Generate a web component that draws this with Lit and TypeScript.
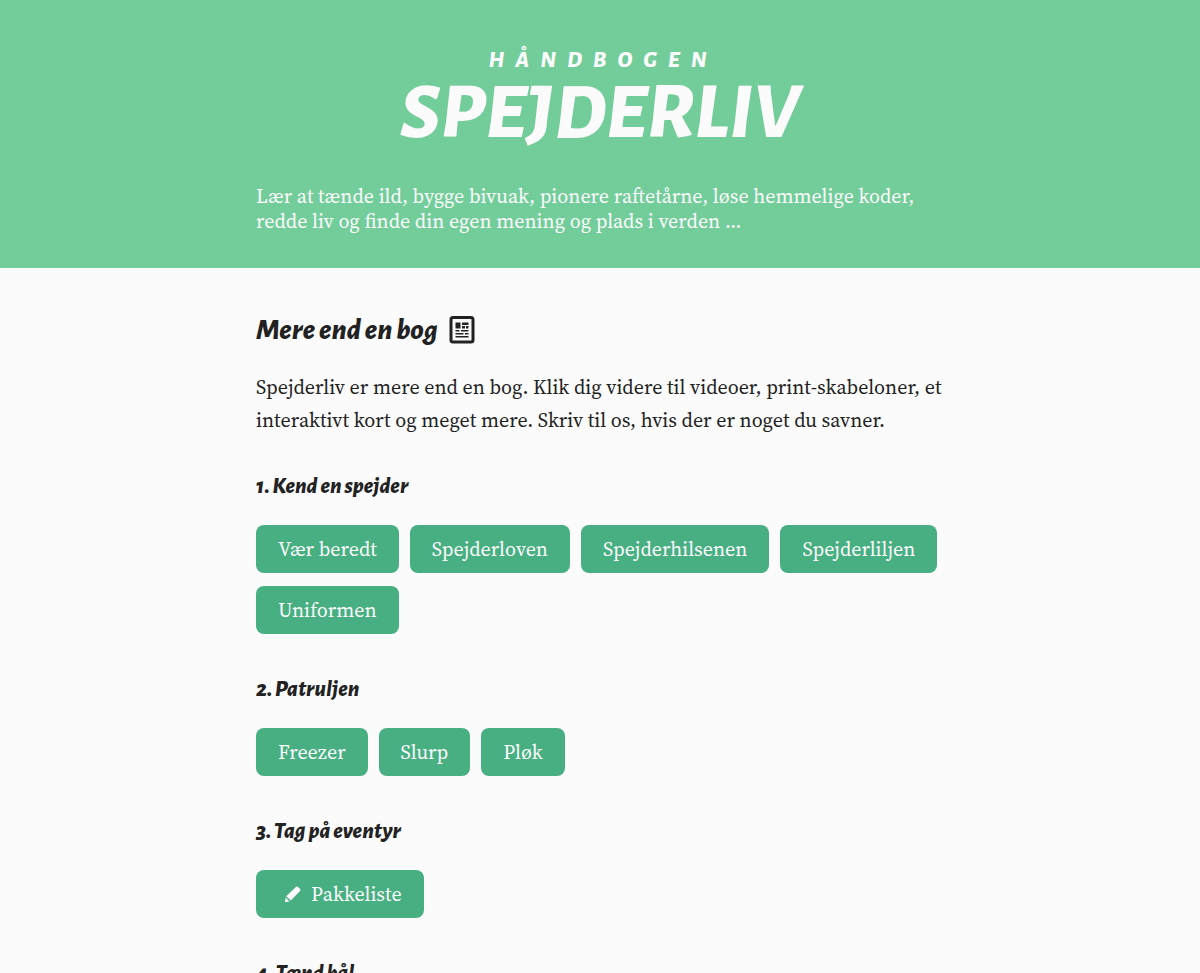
import { LitElement, html, css, svg, nothing } from "lit";
import { customElement } from "lit/decorators.js";

interface Chapter {
  title: string;
  links: { label: string; pencil?: boolean }[];
}

const chapters: Chapter[] = [
  {
    title: "1. Kend en spejder",
    links: [
      { label: "Vær beredt" },
      { label: "Spejderloven" },
      { label: "Spejderhilsenen" },
      { label: "Spejderliljen" },
      { label: "Uniformen" },
    ],
  },
  { title: "2. Patruljen", links: [{ label: "Freezer" }, { label: "Slurp" }, { label: "Pløk" }] },
  { title: "3. Tag på eventyr", links: [{ label: "Pakkeliste", pencil: true }] },
  { title: "4. Tænd bål", links: [] },
];

const pencilIcon = html`<svg class="pencil" viewBox="0 0 18 18" aria-hidden="true">
  ${svg`<path fill="currentColor" d="M1 17.2 1.6 12.6 5.4 16.4ZM2.2 11.2 11.6 2.2Q12.8 1 14 2L16 3.8Q17 4.8 16 6L6.8 15.4Z"/>`}
</svg>`;

const paperIcon = html`<svg class="paper" viewBox="0 0 26 28" aria-hidden="true">
  ${svg`<rect x="2" y="1.5" width="22" height="24.5" rx="2" fill="none" stroke="currentColor" stroke-width="3"/>
  <path fill="currentColor" d="M6.5 6.5h5v6h-5zM13 6.5h6.5v2.5H13zM13 10h3v2.5h-3zM17 10h2.5v2.5H17zM6.5 14h4v1.5h-4zM12 14h7.5v1.5H12zM6.5 17h8v1.5h-8zM16 17h3.5v1.5H16zM6.5 20h13v1.5h-13z"/>`}
</svg>`;

@customElement("app-root")
export class AppRoot extends LitElement {
  static styles = css`
    :host {
      display: block;
      min-height: 100vh;
      background: #fbfbfb;
      color: #222;
      font: 20px/33px "Source Serif Pro", "Source Serif 4", "Liberation Serif", serif;
    }
    .wrap {
      max-width: 688px;
      margin: 0 auto;
    }
    .hero {
      background: #73cd9a;
      color: #fbfbfb;
      padding: 45px 24px 34px;
    }
    .title,
    h2,
    h3 {
      margin: 0;
      font-family: "Alegreya Sans", Lato, sans-serif;
      font-style: italic;
      font-weight: 800;
    }
    .title {
      display: flex;
      flex-direction: column;
      align-items: center;
      text-transform: uppercase;
      font-size: 80px;
      line-height: 72px;
    }
    .kicker {
      font-size: 23px;
      line-height: 32px;
      letter-spacing: 11px;
      padding-left: 6px;
    }
    .lead {
      margin: 35px 0 0;
      line-height: 25px;
    }
    main {
      padding: 44px 24px 48px;
    }
    h2 {
      display: flex;
      align-items: center;
      gap: 11px;
      font-size: 30px;
      line-height: 36px;
    }
    .paper {
      width: 26px;
      height: 28px;
    }
    .intro {
      margin: 23px 0 35px;
    }
    h3 {
      font-size: 23px;
      line-height: 30px;
      margin: 0 0 23px;
    }
    .links {
      display: flex;
      flex-wrap: wrap;
      gap: 13px 11px;
      margin-bottom: 41px;
    }
    .link {
      display: flex;
      align-items: center;
      gap: 9px;
      box-sizing: border-box;
      height: 48px;
      padding: 0 22px;
      border-radius: 8px;
      background: #47af82;
      color: #fbfbfb;
      text-decoration: none;
    }
    .pencil {
      width: 18px;
      height: 18px;
      margin-left: 6px;
    }
  `;

  render() {
    return html`
      <header class="hero">
        <div class="wrap">
          <h1 class="title"><span class="kicker">Håndbogen</span><span>Spejderliv</span></h1>
          <p class="lead">
            Lær at tænde ild, bygge bivuak, pionere raftetårne, løse hemmelige koder, redde liv og finde din egen mening og plads i verden …
          </p>
        </div>
      </header>
      <main>
        <div class="wrap">
          <h2>Mere end en bog ${paperIcon}</h2>
          <p class="intro">
            Spejderliv er mere end en bog. Klik dig videre til videoer, print-skabeloner, et interaktivt kort og meget mere. Skriv til os, hvis der er noget du savner.
          </p>
          ${chapters.map(
            (chapter) => html`<section>
              <h3>${chapter.title}</h3>
              <div class="links">
                ${chapter.links.map(
                  (link) => html`<a class="link" href="#">${link.pencil ? pencilIcon : nothing}${link.label}</a>`
                )}
              </div>
            </section>`
          )}
        </div>
      </main>
    `;
  }
}
